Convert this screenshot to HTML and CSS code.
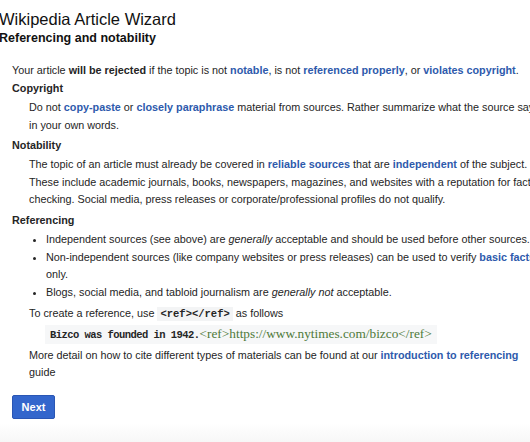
FILE: index.html
```html
<!DOCTYPE html>
<html lang="en">
<head>
    <meta charset="UTF-8">
    <title>Wikipedia Article Wizard</title>
    <link rel="stylesheet" href="styles.css">
</head>
<body>
    <div class="wizard">
        <h1 class="wizard-title">Wikipedia Article Wizard</h1>
        <h2 class="wizard-step">Referencing and notability</h2>

        <div class="wizard-body">
            <p class="lead">Your article <b>will be rejected</b> if the topic is not <a href="#">notable</a>, is not <a href="#">referenced properly</a>, or <a href="#">violates copyright</a>.</p>

            <h3 class="section-title">Copyright</h3>
            <p class="section-text">Do not <a href="#">copy-paste</a> or <a href="#">closely paraphrase</a> material from sources. Rather summarize what the source says in your own words.</p>

            <h3 class="section-title">Notability</h3>
            <p class="section-text">The topic of an article must already be covered in <a href="#">reliable sources</a> that are <a href="#">independent</a> of the subject. These include academic journals, books, newspapers, magazines, and websites with a reputation for fact-checking. Social media, press releases or corporate/professional profiles do not qualify.</p>

            <h3 class="section-title">Referencing</h3>
            <ul class="section-list">
                <li>Independent sources (see above) are <i>generally</i> acceptable and should be used before other sources.</li>
                <li>Non-independent sources (like company websites or press releases) can be used to verify <a href="#">basic facts</a> only.</li>
                <li>Blogs, social media, and tabloid journalism are <i>generally not</i> acceptable.</li>
            </ul>
            <p class="section-text tag-line">To create a reference, use <code class="tag">&lt;ref&gt;&lt;/ref&gt;</code> as follows</p>
            <div class="example"><span class="example-text">Bizco was founded in 1942.</span><span class="example-ref">&lt;ref&gt;https://www.nytimes.com/bizco&lt;/ref&gt;</span></div>
            <p class="section-text more">More detail on how to cite different types of materials can be found at our <a href="#">introduction to referencing</a> guide</p>
        </div>

        <div class="wizard-actions">
            <button class="next-button">Next</button>
        </div>
    </div>
    <div class="footer-band"></div>
</body>
</html>
```

FILE: styles.css
```css
body {
    margin: 0;
    background: #fff;
    color: #252525;
    font-family: "Liberation Sans", Arial, sans-serif;
    overflow: hidden;
}

.wizard {
    width: 530px;
    padding: 9px 0 0 12px;
    height: 414px;
}

.wizard-title {
    margin: 0 0 0 -13px;
    font-size: 16.5px;
    font-weight: normal;
    line-height: 20px;
    color: #111;
    white-space: nowrap;
}

.wizard-step {
    margin: 0 0 0 -13px;
    font-size: 12.5px;
    font-weight: bold;
    line-height: 18px;
    color: #111;
    white-space: nowrap;
}

.wizard-body {
    margin-top: 15px;
    font-size: 10.8px;
    line-height: 17.5px;
}

.wizard-body a {
    color: #2e5aac;
    font-weight: bold;
    text-decoration: none;
}

.wizard-body p {
    margin: 0;
}

.section-title {
    margin: 3px 0 1.5px;
    font-size: 10.8px;
    font-weight: bold;
    line-height: 17.5px;
}

.lead + .section-title {
    margin-top: 0.5px;
}

.section-text {
    padding-left: 17px;
}

.section-list {
    margin: 2px 0 0;
    padding-left: 34px;
}

.tag-line {
    margin-top: 4px !important;
}

.tag {
    background: #f3f4f5;
    font-family: "Liberation Mono", monospace;
    font-weight: bold;
    font-size: 10.5px;
    padding: 1px 3px;
}

.example {
    margin: 1px 0 0 33px;
    padding: 0 5px;
    background: #f6f7f8;
    display: inline-block;
    line-height: 18px;
}

.example-text {
    font-family: "Liberation Mono", monospace;
    font-weight: bold;
    font-size: 10.5px;
    letter-spacing: -0.55px;
}

.example-ref {
    font-family: "Liberation Serif", serif;
    color: #4f7a3a;
    font-size: 13.3px;
}

.more {
    margin-top: 3px !important;
}

.wizard-actions {
    margin-top: 13px;
}

.next-button {
    background: #3366cc;
    color: #fff;
    border: 1px solid #2a56b4;
    border-radius: 2px;
    font-family: "Liberation Sans", Arial, sans-serif;
    font-weight: bold;
    font-size: 11px;
    height: 24px;
    width: 43px;
    padding: 0;
}

.footer-band {
    height: 28px;
    background: linear-gradient(#fff, #f3f3f3);
}
```
